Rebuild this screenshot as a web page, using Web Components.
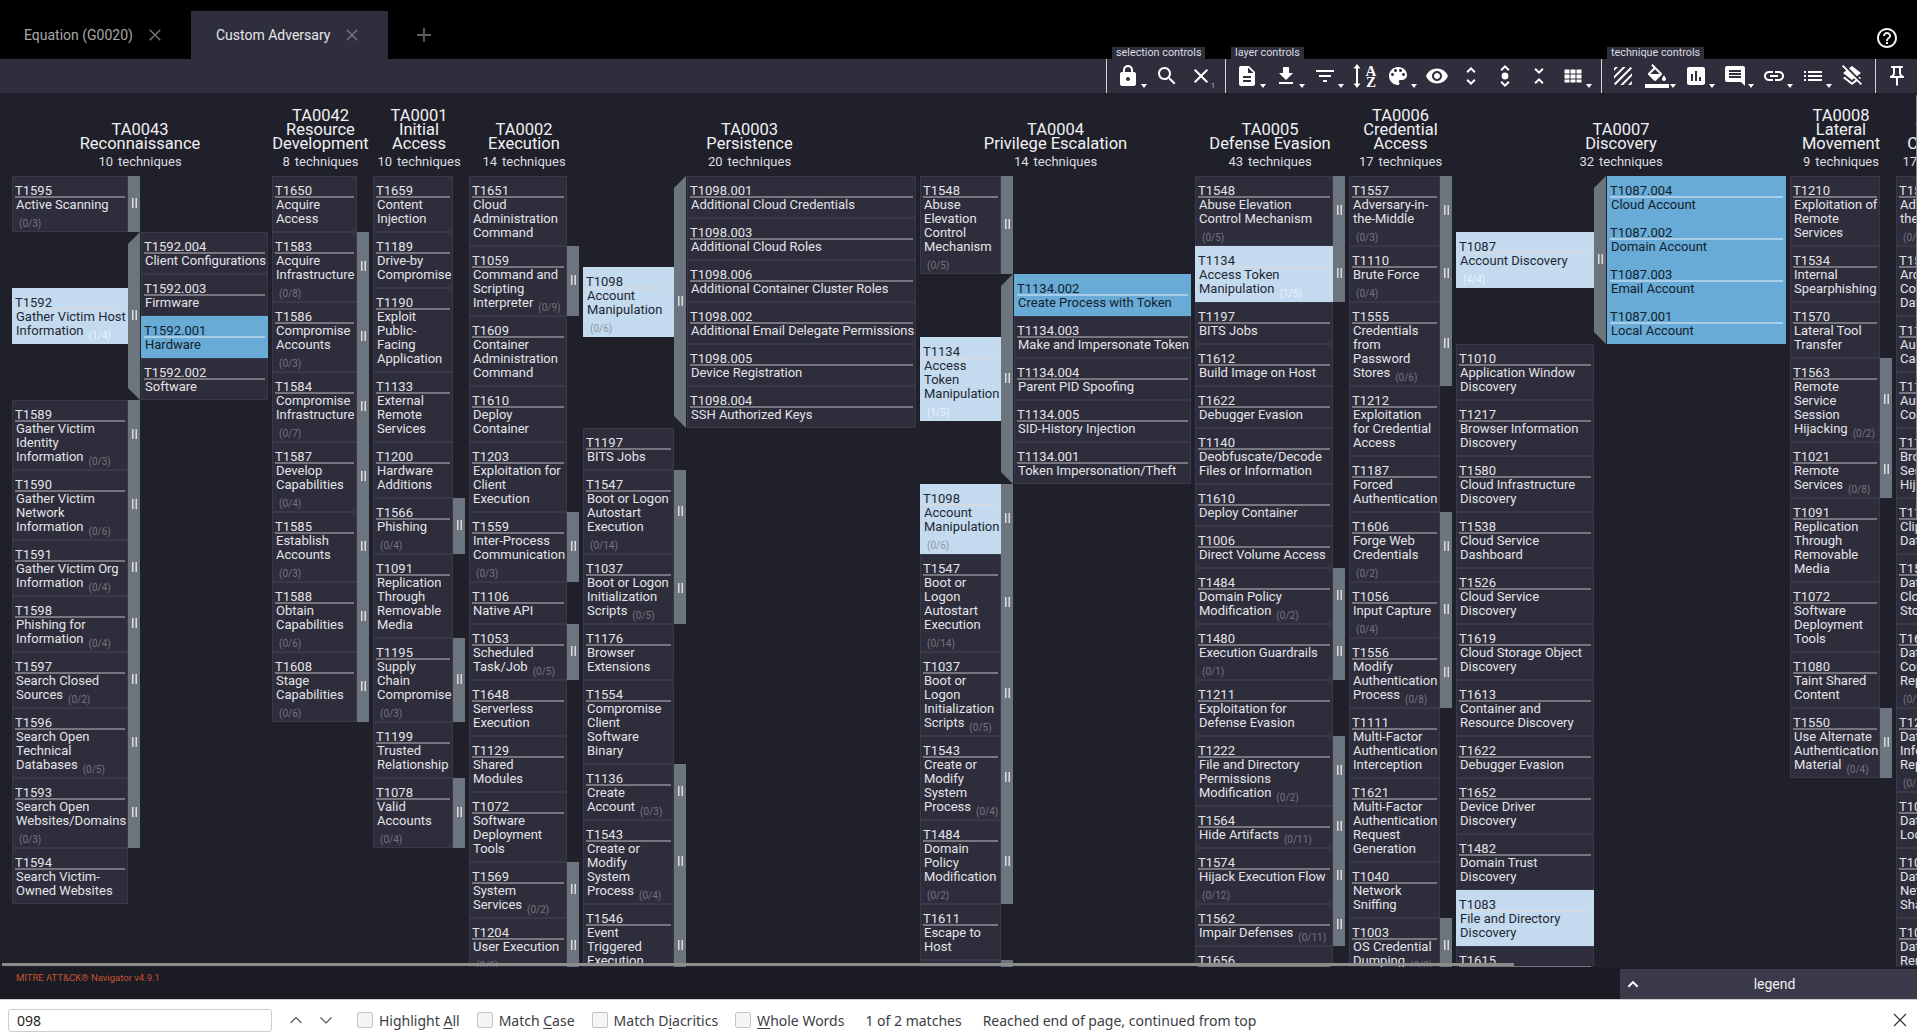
<!DOCTYPE html>
<html lang="en">
<head>
<meta charset="utf-8">
<title>MITRE ATT&amp;CK Navigator</title>
<style>
    html, body { margin: 0; height: 100%; overflow: hidden; background: #20202a; }
</style>
</head>
<body>
<nav-app></nav-app>
<script>
const ICONS = {
    lock: '<path d="M18 8h-1V6c0-2.76-2.24-5-5-5S7 3.24 7 6v2H6c-1.1 0-2 .9-2 2v10c0 1.1.9 2 2 2h12c1.1 0 2-.9 2-2V10c0-1.1-.9-2-2-2zm-6 9c-1.1 0-2-.9-2-2s.9-2 2-2 2 .9 2 2-.9 2-2 2zm3.1-9H8.9V6c0-1.71 1.39-3.1 3.1-3.1 1.71 0 3.1 1.39 3.1 3.1v2z"/>',
    search: '<path d="M15.5 14h-.79l-.28-.27C15.41 12.59 16 11.11 16 9.5 16 5.91 13.09 3 9.5 3S3 5.91 3 9.5 5.91 16 9.5 16c1.61 0 3.09-.59 4.23-1.57l.27.28v.79l5 4.99L20.49 19l-4.99-5zm-6 0C7.01 14 5 11.99 5 9.5S7.01 5 9.5 5 14 7.01 14 9.5 11.99 14 9.5 14z"/>',
    close: '<path d="M19 6.41L17.59 5 12 10.59 6.41 5 5 6.41 10.59 12 5 17.59 6.41 19 12 13.41 17.59 19 19 17.59 13.41 12z"/>',
    layer: '<path d="M14 2H6c-1.1 0-1.99.9-1.99 2L4 20c0 1.1.89 2 1.99 2H18c1.1 0 2-.9 2-2V8l-6-6zm2 16H8v-2h8v2zm0-4H8v-2h8v2zm-3-5V3.5L18.5 9H13z"/>',
    download: '<path d="M19 9h-4V3H9v6H5l7 7 7-7zM5 18v2h14v-2H5z"/>',
    filter: '<path d="M10 18h4v-2h-4v2zM3 6v2h18V6H3zm3 7h12v-2H6v2z"/>',
    sort: '<path d="M5 0l3.4 4.4H6V19.6h2.4L5 24l-3.4-4.4H4V4.4H1.6z"/><text x="19" y="11.5" text-anchor="middle" font-family="Liberation Serif" font-weight="700" font-size="15">A</text><text x="19" y="23" text-anchor="middle" font-family="Liberation Serif" font-weight="700" font-size="15">Z</text>',
    palette: '<path d="M12 3c-4.97 0-9 4.03-9 9s4.03 9 9 9c.83 0 1.5-.67 1.5-1.5 0-.39-.15-.74-.39-1.01-.23-.26-.38-.61-.38-.99 0-.83.67-1.5 1.5-1.5H16c2.76 0 5-2.24 5-5 0-4.42-4.03-8-9-8zm-5.5 9c-.83 0-1.5-.67-1.5-1.5S5.67 9 6.5 9 8 9.67 8 10.5 7.33 12 6.5 12zm3-4C8.67 8 8 7.33 8 6.5S8.67 5 9.5 5s1.5.67 1.5 1.5S10.33 8 9.5 8zm5 0c-.83 0-1.5-.67-1.5-1.5S13.67 5 14.5 5s1.5.67 1.5 1.5S15.33 8 14.5 8zm3 4c-.83 0-1.5-.67-1.5-1.5S16.67 9 17.5 9s1.5.67 1.5 1.5-.67 1.5-1.5 1.5z"/>',
    eye: '<path d="M12 4.5C7 4.5 2.73 7.61 1 12c1.73 4.39 6 7.5 11 7.5s9.27-3.11 11-7.5c-1.73-4.39-6-7.5-11-7.5zM12 17c-2.76 0-5-2.24-5-5s2.24-5 5-5 5 2.24 5 5-2.24 5-5 5zm0-8c-1.66 0-3 1.34-3 3s1.34 3 3 3 3-1.34 3-3-1.34-3-3-3z"/>',
    more: '<path d="M12 5.83L15.17 9l1.41-1.41L12 3 7.41 7.59 8.83 9 12 5.83zm0 12.34L8.83 15l-1.41 1.41L12 21l4.59-4.59L15.17 15 12 18.17z"/>',
    annot: '<path d="M12 3.83L15.17 7l1.41-1.41L12 1 7.41 5.59 8.83 7 12 3.83zm0 16.34L8.83 17l-1.41 1.41L12 23l4.59-4.59L15.17 17 12 20.17z"/><circle cx="12" cy="12" r="3.4"/>',
    less: '<path d="M7.41 18.59L8.83 20 12 16.83 15.17 20l1.41-1.41L12 14l-4.59 4.59zm9.18-13.18L15.17 4 12 7.17 8.83 4 7.41 5.41 12 10l4.59-4.59z"/>',
    grid: '<path d="M3.5 5.5h5v4h-5zM9.5 5.5h5v4h-5zM15.5 5.5h5v4h-5zM3.5 10.5h5v4h-5zM9.5 10.5h5v4h-5zM15.5 10.5h5v4h-5zM3.5 15.5h5v3h-5zM9.5 15.5h5v3h-5zM15.5 15.5h5v3h-5z"/>',
    texture: '<path d="M19.51 3.08L3.08 19.51c.09.34.27.65.51.9.25.24.56.42.9.51L20.93 4.49c-.19-.69-.73-1.23-1.42-1.41zM11.88 3L3 11.88v2.83L14.71 3h-2.83zM5 3c-1.1 0-2 .9-2 2v2l4-4H5zm14 18c.55 0 1.05-.22 1.41-.59.37-.36.59-.86.59-1.41v-2l-4 4h2zm-9.71 0h2.83L21 12.12V9.29L9.29 21z"/>',
    fill: '<path d="M16.56 8.94L7.62 0 6.21 1.41l2.38 2.38-5.15 5.15c-.59.59-.59 1.54 0 2.12l5.5 5.5c.29.29.68.44 1.06.44s.77-.15 1.06-.44l5.5-5.5c.59-.58.59-1.53 0-2.12zM5.21 10L10 5.21 14.79 10H5.21zM19 11.5s-2 2.17-2 3.5c0 1.1.9 2 2 2s2-.9 2-2c0-1.33-2-3.5-2-3.5z"/><path d="M0 20h24v4H0z"/>',
    chart: '<path d="M19 3H5c-1.1 0-2 .9-2 2v14c0 1.1.9 2 2 2h14c1.1 0 2-.9 2-2V5c0-1.1-.9-2-2-2zM9 17H7v-7h2v7zm4 0h-2V7h2v10zm4 0h-2v-4h2v4z"/>',
    comment: '<path d="M21.99 4c0-1.1-.89-2-1.99-2H4c-1.1 0-2 .9-2 2v12c0 1.1.9 2 2 2h14l4 4-.01-18zM18 14H6v-2h12v2zm0-3H6V9h12v2zm0-3H6V6h12v2z"/>',
    link: '<path d="M3.9 12c0-1.71 1.39-3.1 3.1-3.1h4V7H7c-2.76 0-5 2.24-5 5s2.24 5 5 5h4v-1.9H7c-1.71 0-3.1-1.39-3.1-3.1zM8 13h8v-2H8v2zm9-6h-4v1.9h4c1.71 0 3.1 1.39 3.1 3.1s-1.39 3.1-3.1 3.1h-4V17h4c2.76 0 5-2.24 5-5s-2.24-5-5-5z"/>',
    list: '<path d="M3 13h2v-2H3v2zm0 4h2v-2H3v2zm0-8h2V7H3v2zm4 4h14v-2H7v2zm0 4h14v-2H7v2zM7 7v2h14V7H7z"/>',
    clear: '<path d="M19.81 14.99l1.19-.92-1.43-1.43-1.19.92 1.43 1.43zm-.45-4.72L21 9l-9-7-2.91 2.27 7.87 7.88 2.4-1.88zM3.27 1L2 2.27l4.22 4.22L3 9l1.63 1.27L12 16l2.1-1.63 1.43 1.43L12 18.54l-7.37-5.73L3 14.07l9 7 4.95-3.85L20.73 21 22 19.73 3.27 1z"/>',
    pin: '<path d="M14 4v5c0 1.12.37 2.16 1 3H9c.65-.86 1-1.9 1-3V4h4m3-2H7c-.55 0-1 .45-1 1s.45 1 1 1h1v5c0 1.66-1.34 3-3 3v2h5.97v7l1 1 1-1v-7H19v-2c-1.66 0-3-1.34-3-3V4h1c.55 0 1-.45 1-1s-.45-1-1-1z"/>',
    help: '<path d="M11 18h2v-2h-2v2zm1-16C6.48 2 2 6.48 2 12s4.48 10 10 10 10-4.48 10-10S17.52 2 12 2zm0 18c-4.41 0-8-3.59-8-8s3.59-8 8-8 8 3.59 8 8-3.59 8-8 8zm0-14c-2.21 0-4 1.79-4 4h2c0-1.1.9-2 2-2s2 .9 2 2c0 2-3 1.75-3 5h2c0-2.25 3-2.5 3-5 0-2.21-1.79-4-4-4z"/>',
};

// row: id|name lines split by ;|count (n = count on a line of its own)|state (l light, b blue)
const TACTICS = [
    { id: 'TA0043', title: 'Reconnaissance', count: 10, tw: 116, sw: 127, rows: [
        'T1595|Active Scanning|n0/3',
        { p: 'T1592|Gather Victim Host;Information|1/4|l', subs: ['T1592.004|Client Configurations', 'T1592.003|Firmware', 'T1592.001|Hardware||b', 'T1592.002|Software'] },
        'T1589|Gather Victim;Identity;Information|0/3',
        'T1590|Gather Victim;Network;Information|0/6',
        'T1591|Gather Victim Org;Information|0/4',
        'T1598|Phishing for;Information|0/4',
        'T1597|Search Closed;Sources|0/2',
        'T1596|Search Open;Technical;Databases|0/5',
        'T1593|Search Open;Websites/Domains|n0/3',
        'T1594|Search Victim-;Owned Websites',
    ] },
    { id: 'TA0042', title: 'Resource;Development', count: 8, tw: 85, rows: [
        'T1650|Acquire;Access',
        'T1583|Acquire;Infrastructure|n0/8',
        'T1586|Compromise;Accounts|n0/3',
        'T1584|Compromise;Infrastructure|n0/7',
        'T1587|Develop;Capabilities|n0/4',
        'T1585|Establish;Accounts|n0/3',
        'T1588|Obtain;Capabilities|n0/6',
        'T1608|Stage;Capabilities|n0/6',
    ] },
    { id: 'TA0001', title: 'Initial;Access', count: 10, tw: 80, rows: [
        'T1659|Content;Injection',
        'T1189|Drive-by;Compromise',
        'T1190|Exploit;Public-;Facing;Application',
        'T1133|External;Remote;Services',
        'T1200|Hardware;Additions',
        'T1566|Phishing|n0/4',
        'T1091|Replication;Through;Removable;Media',
        'T1195|Supply;Chain;Compromise|n0/3',
        'T1199|Trusted;Relationship',
        'T1078|Valid;Accounts|n0/4',
    ] },
    { id: 'TA0002', title: 'Execution', count: 14, tw: 98, rows: [
        'T1651|Cloud;Administration;Command',
        'T1059|Command and;Scripting;Interpreter|0/9',
        'T1609|Container;Administration;Command',
        'T1610|Deploy;Container',
        'T1203|Exploitation for;Client;Execution',
        'T1559|Inter-Process;Communication|n0/3',
        'T1106|Native API',
        'T1053|Scheduled;Task/Job|0/5',
        'T1648|Serverless;Execution',
        'T1129|Shared;Modules',
        'T1072|Software;Deployment;Tools',
        'T1569|System;Services|0/2',
        'T1204|User Execution|n0/3',
    ] },
    { id: 'TA0003', title: 'Persistence', count: 20, tw: 91, sw: 229, rows: [
        { p: 'T1098|Account;Manipulation|n0/6|l', subs: ['T1098.001|Additional Cloud Credentials', 'T1098.003|Additional Cloud Roles', 'T1098.006|Additional Container Cluster Roles', 'T1098.002|Additional Email Delegate Permissions', 'T1098.005|Device Registration', 'T1098.004|SSH Authorized Keys'] },
        'T1197|BITS Jobs',
        'T1547|Boot or Logon;Autostart;Execution|n0/14',
        'T1037|Boot or Logon;Initialization;Scripts|0/5',
        'T1176|Browser;Extensions',
        'T1554|Compromise;Client;Software;Binary',
        'T1136|Create;Account|0/3',
        'T1543|Create or;Modify;System;Process|0/4',
        'T1546|Event;Triggered;Execution|n0/17',
    ] },
    { id: 'TA0004', title: 'Privilege Escalation', count: 14, tw: 81, sw: 177, rows: [
        'T1548|Abuse;Elevation;Control;Mechanism|n0/5',
        { p: 'T1134|Access;Token;Manipulation|n1/5|l', subs: ['T1134.002|Create Process with Token||b', 'T1134.003|Make and Impersonate Token', 'T1134.004|Parent PID Spoofing', 'T1134.005|SID-History Injection', 'T1134.001|Token Impersonation/Theft'] },
        'T1098|Account;Manipulation|n0/6|l',
        'T1547|Boot or;Logon;Autostart;Execution|n0/14',
        'T1037|Boot or;Logon;Initialization;Scripts|0/5',
        'T1543|Create or;Modify;System;Process|0/4',
        'T1484|Domain;Policy;Modification|n0/2',
        'T1611|Escape to;Host',
        'T1546|Event;Triggered;Execution|n0/17',
    ] },
    { id: 'TA0005', title: 'Defense Evasion', count: 43, tw: 138, rows: [
        'T1548|Abuse Elevation;Control Mechanism|n0/5',
        'T1134|Access Token;Manipulation|1/5|l',
        'T1197|BITS Jobs',
        'T1612|Build Image on Host',
        'T1622|Debugger Evasion',
        'T1140|Deobfuscate/Decode;Files or Information',
        'T1610|Deploy Container',
        'T1006|Direct Volume Access',
        'T1484|Domain Policy;Modification|0/2',
        'T1480|Execution Guardrails|n0/1',
        'T1211|Exploitation for;Defense Evasion',
        'T1222|File and Directory;Permissions;Modification|0/2',
        'T1564|Hide Artifacts|0/11',
        'T1574|Hijack Execution Flow|n0/12',
        'T1562|Impair Defenses|0/11',
        'T1656|Impersonation',
    ] },
    { id: 'TA0006', title: 'Credential;Access', count: 17, tw: 91, rows: [
        'T1557|Adversary-in-;the-Middle|n0/3',
        'T1110|Brute Force|n0/4',
        'T1555|Credentials;from;Password;Stores|0/6',
        'T1212|Exploitation;for Credential;Access',
        'T1187|Forced;Authentication',
        'T1606|Forge Web;Credentials|n0/2',
        'T1056|Input Capture|n0/4',
        'T1556|Modify;Authentication;Process|0/8',
        'T1111|Multi-Factor;Authentication;Interception',
        'T1621|Multi-Factor;Authentication;Request;Generation',
        'T1040|Network;Sniffing',
        'T1003|OS Credential;Dumping|0/8',
    ] },
    { id: 'TA0007', title: 'Discovery', count: 32, tw: 138, sw: 179, rows: [
        { p: 'T1087|Account Discovery|n4/4|l', subs: ['T1087.004|Cloud Account||b', 'T1087.002|Domain Account||b', 'T1087.003|Email Account||b', 'T1087.001|Local Account||b'] },
        'T1010|Application Window;Discovery',
        'T1217|Browser Information;Discovery',
        'T1580|Cloud Infrastructure;Discovery',
        'T1538|Cloud Service;Dashboard',
        'T1526|Cloud Service;Discovery',
        'T1619|Cloud Storage Object;Discovery',
        'T1613|Container and;Resource Discovery',
        'T1622|Debugger Evasion',
        'T1652|Device Driver;Discovery',
        'T1482|Domain Trust;Discovery',
        'T1083|File and Directory;Discovery||l',
        'T1615|Group Policy;Discovery',
    ] },
    { id: 'TA0008', title: 'Lateral;Movement', count: 9, tw: 90, rows: [
        'T1210|Exploitation of;Remote;Services',
        'T1534|Internal;Spearphishing',
        'T1570|Lateral Tool;Transfer',
        'T1563|Remote;Service;Session;Hijacking|0/2',
        'T1021|Remote;Services|0/8',
        'T1091|Replication;Through;Removable;Media',
        'T1072|Software;Deployment;Tools',
        'T1080|Taint Shared;Content',
        'T1550|Use Alternate;Authentication;Material|0/4',
    ] },
    { id: 'TA0009', title: 'Collection', count: 17, tw: 84, rows: [
        'T1557|Adversary-in-;the-Middle|n0/3',
        'T1560|Archive;Collected;Data|0/3',
        'T1123|Audio;Capture',
        'T1119|Automated;Collection',
        'T1185|Browser;Session;Hijacking',
        'T1115|Clipboard;Data',
        'T1530|Data from;Cloud;Storage',
        'T1602|Data from;Configuration;Repository|n0/2',
        'T1213|Data from;Information;Repositories|n0/3',
        'T1005|Data from;Local System',
        'T1039|Data from;Network;Shared Drive',
        'T1025|Data from;Removable;Media',
    ] },
];

function cellMarkup(row, slot) {
    const [tid, name, count = '', state = ''] = row.split('|');
    const own = count.startsWith('n');
    return `<tech-cell ${slot ? `slot="${slot}"` : ''} tid="${tid}" count="${count.replace('n', '')}" ${own ? 'own' : ''} state="${state}">${name.split(';').join('<br>')}</tech-cell>`;
}

function rowMarkup(row) {
    if (typeof row === 'string') {
        const hasSubs = row.split('|')[2];
        return `<tech-row>${cellMarkup(row, 'parent')}${hasSubs ? '<sub-bar></sub-bar>' : ''}</tech-row>`;
    }
    return `<tech-row>${cellMarkup(row.p, 'parent')}<sub-bar open></sub-bar>${row.subs.map(s => cellMarkup(s, 'sub')).join('')}</tech-row>`;
}

class NavApp extends HTMLElement {
    constructor() {
        super();
        this.attachShadow({ mode: 'open' });
    }

    connectedCallback() {
        this.shadowRoot.innerHTML = `
            <style>
                :host {
                    display: flex;
                    flex-direction: column;
                    height: 1032px;
                    font-family: Roboto, "Liberation Sans", sans-serif;
                    color: #e4e4e6;
                }
                attack-matrix { flex: 1; min-height: 0; }
            </style>
            <tab-bar></tab-bar>
            <nav-toolbar></nav-toolbar>
            <attack-matrix></attack-matrix>
            <nav-footer></nav-footer>
            <find-bar></find-bar>
        `;
    }
}

class NavTab extends HTMLElement {
    constructor() {
        super();
        this.attachShadow({ mode: 'open' });
    }

    connectedCallback() {
        this.shadowRoot.innerHTML = `
            <style>
                :host {
                    display: flex;
                    align-items: center;
                    padding: 0 29px 0 24px;
                    font-size: 14px;
                    color: #a8a8a8;
                }
                :host([active]) {
                    background: #2f2e3d;
                    color: #e6e6ea;
                    padding-left: 25px;
                }
                svg { margin-left: 15px; width: 14px; height: 14px; }
            </style>
            <slot></slot>
            <svg viewBox="0 0 14 14" fill="none" stroke="#7c7c82" stroke-width="1.3"><path d="M1.7 1.7l10.6 10.6M12.3 1.7L1.7 12.3"/></svg>
        `;
    }
}

class TabBar extends HTMLElement {
    constructor() {
        super();
        this.attachShadow({ mode: 'open' });
    }

    connectedCallback() {
        this.shadowRoot.innerHTML = `
            <style>
                :host {
                    display: flex;
                    height: 59px;
                    box-sizing: border-box;
                    padding-top: 11px;
                    background: #000;
                }
                .add { width: 14px; height: 14px; align-self: center; margin-left: 29px; }
                .help { width: 24px; height: 24px; margin: 15px 18px 0 auto; fill: #f2f2f2; }
            </style>
            <nav-tab>Equation (G0020)</nav-tab>
            <nav-tab active>Custom Adversary</nav-tab>
            <svg class="add" viewBox="0 0 14 14" fill="none" stroke="#5f5f66" stroke-width="1.8"><path d="M7 0v14M0 7h14"/></svg>
            <svg class="help" viewBox="0 0 24 24">${ICONS.help}</svg>
        `;
    }
}

class ToolButton extends HTMLElement {
    constructor() {
        super();
        this.attachShadow({ mode: 'open' });
    }

    connectedCallback() {
        const dd = this.hasAttribute('dd');
        const badge = this.getAttribute('badge');
        this.shadowRoot.innerHTML = `
            <style>
                :host {
                    display: block;
                    position: relative;
                    flex: none;
                    width: ${this.getAttribute('w') || (dd ? 39 : 34)}px;
                    height: 34px;
                }
                svg.icon {
                    position: absolute;
                    left: 5px;
                    top: 5px;
                    width: 24px;
                    height: 24px;
                    fill: #fff;
                    overflow: visible;
                }
                .tri {
                    position: absolute;
                    left: 30px;
                    top: 25px;
                    width: 0;
                    height: 0;
                    border-left: 3px solid transparent;
                    border-right: 3px solid transparent;
                    border-top: 4px solid #fff;
                }
                .badge {
                    position: absolute;
                    left: 27px;
                    top: 23px;
                    font-size: 7px;
                    color: #c8c8d0;
                }
            </style>
            <svg class="icon" viewBox="0 0 24 24">${ICONS[this.getAttribute('icon')]}</svg>
            ${dd ? '<span class="tri"></span>' : ''}
            ${badge ? `<span class="badge">${badge}</span>` : ''}
        `;
    }
}

class ToolSection extends HTMLElement {
    constructor() {
        super();
        this.attachShadow({ mode: 'open' });
    }

    connectedCallback() {
        const label = this.getAttribute('label');
        this.shadowRoot.innerHTML = `
            <style>
                :host {
                    display: flex;
                    position: relative;
                    padding: 0 6px 0 4px;
                    border-left: 1px solid #d4d4d8;
                }
                .label {
                    position: absolute;
                    left: 5px;
                    bottom: 100%;
                    height: 12px;
                    padding: 0 4px;
                    background: #2f2e3d;
                    font-size: 10.8px;
                    line-height: 12px;
                    white-space: nowrap;
                    color: #dcdce0;
                }
            </style>
            ${label ? `<span class="label">${label}</span>` : ''}
            <slot></slot>
        `;
    }
}

class NavToolbar extends HTMLElement {
    constructor() {
        super();
        this.attachShadow({ mode: 'open' });
    }

    connectedCallback() {
        this.shadowRoot.innerHTML = `
            <style>
                :host {
                    display: flex;
                    justify-content: flex-end;
                    height: 34px;
                    background: #2f2e3d;
                }
            </style>
            <tool-section label="selection controls">
                <tool-button icon="lock" dd></tool-button>
                <tool-button icon="search"></tool-button>
                <tool-button icon="close" badge="1" w="35"></tool-button>
            </tool-section>
            <tool-section label="layer controls">
                <tool-button icon="layer" dd></tool-button>
                <tool-button icon="download" dd></tool-button>
                <tool-button icon="filter" dd></tool-button>
                <tool-button icon="sort"></tool-button>
                <tool-button icon="palette" dd></tool-button>
                <tool-button icon="eye"></tool-button>
                <tool-button icon="more"></tool-button>
                <tool-button icon="annot"></tool-button>
                <tool-button icon="less"></tool-button>
                <tool-button icon="grid" dd></tool-button>
            </tool-section>
            <tool-section label="technique controls">
                <tool-button icon="texture"></tool-button>
                <tool-button icon="fill" dd></tool-button>
                <tool-button icon="chart" dd></tool-button>
                <tool-button icon="comment" dd></tool-button>
                <tool-button icon="link" dd></tool-button>
                <tool-button icon="list" dd></tool-button>
                <tool-button icon="clear"></tool-button>
            </tool-section>
            <tool-section style="padding-right:3px">
                <tool-button icon="pin"></tool-button>
            </tool-section>
        `;
    }
}

class TechCell extends HTMLElement {
    constructor() {
        super();
        this.attachShadow({ mode: 'open' });
    }

    connectedCallback() {
        const count = this.getAttribute('count');
        const own = this.hasAttribute('own');
        const scored = count && !count.startsWith('0');
        this.shadowRoot.innerHTML = `
            <style>
                :host {
                    display: block;
                    box-sizing: border-box;
                    padding: 7px 2px 5px;
                    background: #2e2d3b;
                    border: 1px solid #3a3949;
                    font-size: 13px;
                    line-height: 14px;
                    white-space: nowrap;
                    color: #e4e4e8;
                }
                :host([state="l"]) {
                    background: #c4daef;
                    border-color: #c4daef;
                    color: #1f2833;
                }
                :host([state="b"]) {
                    background: #67abd6;
                    border-color: #67abd6;
                    color: #14212c;
                }
                .tid {
                    box-sizing: border-box;
                    height: 14px;
                    border-bottom: 2px solid #77767f;
                }
                :host([state="l"]) .tid { border-color: #d2dbe4; }
                :host([state="b"]) .tid { border-color: #a9cde6; }
                .name { padding-left: 1px; }
                .count {
                    margin-left: 5px;
                    font-size: 10px;
                    line-height: 0;
                    vertical-align: -4px;
                    color: #75747e;
                }
                .count.own { margin-left: 3px; }
                :host([state="l"]) .count { color: #8f979f; }
                .count.scored { color: #eaf2fa !important; }
            </style>
            <div class="tid">${this.getAttribute('tid')}</div>
            <div class="name"><slot></slot>${count ? `${own ? '<br>' : ''}<span class="count ${own ? 'own' : ''} ${scored ? 'scored' : ''}">(${count})</span>` : ''}</div>
        `;
    }
}

class SubBar extends HTMLElement {
    constructor() {
        super();
        this.attachShadow({ mode: 'open' });
    }

    connectedCallback() {
        this.shadowRoot.innerHTML = `
            <style>
                :host {
                    display: flex;
                    flex: none;
                    align-items: center;
                    justify-content: center;
                    width: 12px;
                    background: #6c757d;
                    padding-bottom: 2px;
                    box-sizing: border-box;
                }
                :host([open]) {
                    clip-path: polygon(100% 0, 100% 100%, 0 calc(100% - 12px), 0 12px);
                }
                svg { display: block; width: 5px; height: 10px; }
            </style>
            <svg viewBox="0 0 5 10" fill="none" stroke="#eceef0" stroke-width="1.3"><path d="M.8 0v10M4.2 0v10"/></svg>
        `;
    }
}

class TechRow extends HTMLElement {
    constructor() {
        super();
        this.attachShadow({ mode: 'open' });
    }

    connectedCallback() {
        this.shadowRoot.innerHTML = `
            <style>
                :host { display: flex; align-items: stretch; }
                .parent {
                    flex: none;
                    width: var(--tw);
                    display: flex;
                    flex-direction: column;
                    justify-content: center;
                }
                .subs {
                    flex: none;
                    width: var(--sw);
                    margin-left: 1px;
                    display: flex;
                    flex-direction: column;
                }
            </style>
            <div class="parent"><slot name="parent"></slot></div>
            <slot></slot>
            <div class="subs"><slot name="sub"></slot></div>
        `;
    }
}

class TacticColumn extends HTMLElement {
    constructor() {
        super();
        this.attachShadow({ mode: 'open' });
    }

    connectedCallback() {
        const title = this.getAttribute('title-lines').split(';');
        this.shadowRoot.innerHTML = `
            <style>
                :host {
                    display: flex;
                    flex: none;
                    flex-direction: column;
                }
                header {
                    height: 83px;
                    box-sizing: border-box;
                    padding-bottom: 7px;
                    display: flex;
                    flex-direction: column;
                    justify-content: flex-end;
                    align-items: center;
                    text-align: center;
                    white-space: nowrap;
                }
                .title { font-size: 16.5px; line-height: 14px; color: #f0f0f3; }
                .sum { margin-top: 4px; font-size: 13px; line-height: 14px; color: #dcdce0; }
                .sum span { margin-right: 5px; }
            </style>
            <header>
                <div class="title">${this.getAttribute('tid')}<br>${title.join('<br>')}</div>
                <div class="sum"><span>${this.getAttribute('total')}</span>techniques</div>
            </header>
            <slot></slot>
        `;
    }
}

class AttackMatrix extends HTMLElement {
    constructor() {
        super();
        this.attachShadow({ mode: 'open' });
    }

    connectedCallback() {
        this.shadowRoot.innerHTML = `
            <style>
                :host {
                    display: block;
                    position: relative;
                    overflow: hidden;
                    background: #20202a;
                }
                .columns {
                    display: flex;
                    gap: 4px;
                    padding-left: 12px;
                    width: max-content;
                }
                .thumb-x {
                    position: absolute;
                    left: 2px;
                    width: 1512px;
                    bottom: 1px;
                    height: 3px;
                    background: #8c8c8c;
                }
                .thumb-y {
                    position: absolute;
                    right: 0;
                    top: 2px;
                    width: 1px;
                    height: 425px;
                    background: #86868c;
                }
            </style>
            <div class="columns">
                ${TACTICS.map(t => `
                    <tactic-column tid="${t.id}" title-lines="${t.title}" total="${t.count}"
                        style="--tw:${t.tw}px;--sw:${t.sw || 0}px;width:${t.tw + 12 + (t.sw ? t.sw + 1 : 0)}px">
                        ${t.rows.map(rowMarkup).join('')}
                    </tactic-column>`).join('')}
            </div>
            <div class="thumb-x"></div>
            <div class="thumb-y"></div>
        `;
    }
}

class NavFooter extends HTMLElement {
    constructor() {
        super();
        this.attachShadow({ mode: 'open' });
    }

    connectedCallback() {
        this.shadowRoot.innerHTML = `
            <style>
                :host {
                    display: flex;
                    justify-content: space-between;
                    height: 32px;
                    background: #1b1b24;
                }
                .credit {
                    padding: 5px 0 0 16px;
                    font-size: 9.5px;
                    line-height: 12px;
                    color: #c9512f;
                }
                .legend {
                    align-self: flex-end;
                    box-sizing: border-box;
                    width: 297px;
                    height: 30px;
                    padding: 0 0 0 5px;
                    display: flex;
                    align-items: center;
                    background: #3a3a4b;
                    font-size: 14px;
                    color: #eeeef0;
                }
                .legend svg { width: 16px; height: 16px; fill: #fff; }
                .legend span { flex: 1; text-align: center; padding-right: 9px; }
            </style>
            <div class="credit">MITRE ATT&amp;CK® Navigator v4.9.1</div>
            <div class="legend">
                <svg viewBox="0 0 24 24"><path d="M12 7l-8 8 2.2 2.2L12 11.4l5.8 5.8L20 15z"/></svg>
                <span>legend</span>
            </div>
        `;
    }
}

class FindOption extends HTMLElement {
    constructor() {
        super();
        this.attachShadow({ mode: 'open' });
    }

    connectedCallback() {
        this.shadowRoot.innerHTML = `
            <style>
                :host { display: flex; align-items: center; gap: 6px; }
                i {
                    display: block;
                    box-sizing: border-box;
                    width: 16px;
                    height: 16px;
                    background: #f5f5f5;
                    border: 1px solid #c6c6c6;
                    border-radius: 2px;
                }
            </style>
            <i></i>
            <span><slot></slot></span>
        `;
    }
}

class FindBar extends HTMLElement {
    constructor() {
        super();
        this.attachShadow({ mode: 'open' });
    }

    connectedCallback() {
        this.shadowRoot.innerHTML = `
            <style>
                :host {
                    display: flex;
                    align-items: center;
                    box-sizing: border-box;
                    height: 33px;
                    padding: 9px 10px 1px 8px;
                    background: #fff;
                    border-top: 1px solid #cfcfcf;
                    font-family: "Noto Sans", "Open Sans", sans-serif;
                    font-size: 14px;
                    color: #3d3d45;
                    white-space: nowrap;
                }
                .input {
                    box-sizing: border-box;
                    width: 264px;
                    height: 23px;
                    padding: 0 8px;
                    border: 1px solid #cdcdcd;
                    border-radius: 3px;
                    line-height: 21px;
                    color: #222;
                }
                .arrows { display: flex; gap: 14px; margin: 0 23px 0 16px; }
                .arrows svg { width: 16px; height: 16px; fill: none; stroke: #55555c; stroke-width: 1.2; }
                .opts { display: flex; gap: 17px; }
                .msg { margin-left: 21px; }
                .msg2 { margin-left: 21px; }
                .end { margin-left: auto; width: 14px; height: 14px; fill: none; stroke: #33333a; stroke-width: 1.2; }
                u { text-underline-offset: 2px; }
            </style>
            <div class="input">098</div>
            <div class="arrows">
                <svg viewBox="0 0 16 16"><path d="M2.5 11L8 5.5 13.5 11"/></svg>
                <svg viewBox="0 0 16 16"><path d="M2.5 5.5L8 11l5.5-5.5"/></svg>
            </div>
            <div class="opts">
                <find-option>Highlight <u>A</u>ll</find-option>
                <find-option>Match <u>C</u>ase</find-option>
                <find-option>Match D<u>i</u>acritics</find-option>
                <find-option><u>W</u>hole Words</find-option>
            </div>
            <span class="msg">1 of 2 matches</span>
            <span class="msg2">Reached end of page, continued from top</span>
            <svg class="end" viewBox="0 0 14 14"><path d="M1 1l12 12M13 1L1 13"/></svg>
        `;
    }
}

customElements.define('nav-app', NavApp);
customElements.define('nav-tab', NavTab);
customElements.define('tab-bar', TabBar);
customElements.define('tool-button', ToolButton);
customElements.define('tool-section', ToolSection);
customElements.define('nav-toolbar', NavToolbar);
customElements.define('tech-cell', TechCell);
customElements.define('sub-bar', SubBar);
customElements.define('tech-row', TechRow);
customElements.define('tactic-column', TacticColumn);
customElements.define('attack-matrix', AttackMatrix);
customElements.define('nav-footer', NavFooter);
customElements.define('find-option', FindOption);
customElements.define('find-bar', FindBar);
</script>
</body>
</html>
